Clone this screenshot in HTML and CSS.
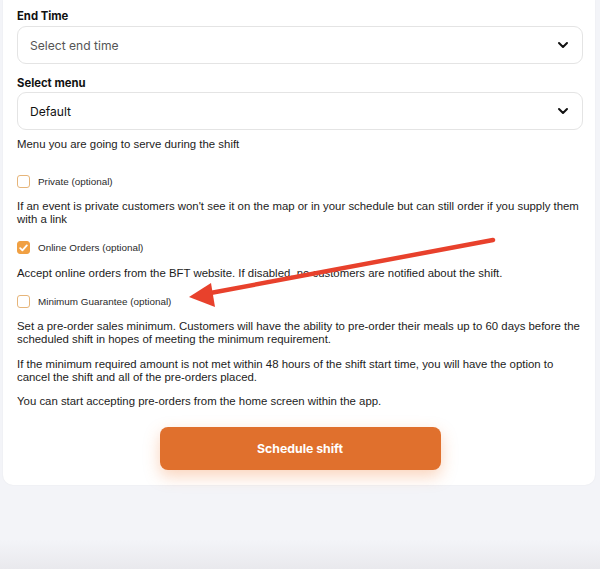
FILE: index.html
```html
<!DOCTYPE html>
<html>

<head>
  <meta name="viewport" content="width=device-width, initial-scale=1" />
  <link rel="stylesheet" href="styles.css">
</head>

<body>
  <div class="page">
    <form class="card">
      <label class="field-label">End Time</label>
      <div class="select">
        <span class="placeholder">Select end time</span>
        <svg class="chevron" width="12" height="8" viewBox="0 0 12 8"><path d="M2 2l4 4 4-4" fill="none" stroke="#111" stroke-width="2" stroke-linecap="round" stroke-linejoin="round"/></svg>
      </div>

      <label class="field-label second">Select menu</label>
      <div class="select">
        <span class="value">Default</span>
        <svg class="chevron" width="12" height="8" viewBox="0 0 12 8"><path d="M2 2l4 4 4-4" fill="none" stroke="#111" stroke-width="2" stroke-linecap="round" stroke-linejoin="round"/></svg>
      </div>
      <p class="help">Menu you are going to serve during the shift</p>

      <div class="check-row first">
        <span class="box"></span>
        <span class="check-label">Private (optional)</span>
      </div>
      <p class="desc">If an event is private customers won't see it on the map or in your schedule but can still order if you supply them with a link</p>

      <div class="check-row">
        <span class="box checked">
          <svg width="9" height="8" viewBox="0 0 9 8"><path d="M1.2 4.2l2.2 2.2 4.4-5" fill="none" stroke="#fff" stroke-width="1.8" stroke-linecap="round" stroke-linejoin="round"/></svg>
        </span>
        <span class="check-label">Online Orders (optional)</span>
      </div>
      <p class="desc">Accept online orders from the BFT website. If disabled, no customers are notified about the shift.</p>

      <div class="check-row">
        <span class="box"></span>
        <span class="check-label">Minimum Guarantee (optional)</span>
      </div>
      <p class="desc">Set a pre-order sales minimum. Customers will have the ability to pre-order their meals up to 60 days before the scheduled shift in hopes of meeting the minimum requirement.</p>
      <p class="desc gap">If the minimum required amount is not met within 48 hours of the shift start time, you will have the option to cancel the shift and all of the pre-orders placed.</p>
      <p class="desc">You can start accepting pre-orders from the home screen within the app.</p>

      <div class="actions">
        <button type="button" class="submit">Schedule shift</button>
      </div>
    </form>

    <!-- annotation arrow drawn over the screenshot -->
    <svg class="arrow" width="600" height="569" viewBox="0 0 600 569">
      <line x1="493" y1="240" x2="205" y2="294" stroke="#e8412c" stroke-width="4.5" stroke-linecap="round"/>
      <polygon points="189,297 211,283 215,307" fill="#e8412c"/>
    </svg>
  </div>
</body>

</html>
```

FILE: styles.css
```css
body {
  margin: 0;
  background: linear-gradient(#f3f4f8 0, #f3f4f8 540px, #e9e9ed 569px);
  font-family: "Liberation Sans", Arial, sans-serif;
  color: #1c1c1c;
  height: 569px;
  overflow: hidden;
}

.page {
  position: relative;
  height: 569px;
}

.card {
  display: block;
  margin: 0 5px 0 3px;
  padding: 8px 12px 15px 14px;
  background: #ffffff;
  border-radius: 0 0 10px 10px;
  box-shadow: 0 0 2px rgba(0, 0, 0, 0.06);
}

.field-label {
  display: block;
  font-family: Inter, sans-serif;
  font-weight: 700;
  font-size: 11.3px;
  line-height: 16px;
  color: #111;
  margin-bottom: 2px;
}

.field-label.second {
  margin-top: 11px;
  margin-bottom: 1px;
}

.select {
  height: 38px;
  box-sizing: border-box;
  border: 1px solid #e4e4e4;
  border-radius: 9px;
  display: flex;
  align-items: center;
  justify-content: space-between;
  padding: 0 12px 0 12px;
  font-family: Inter, sans-serif;
  font-size: 12.1px;
}

.placeholder {
  color: #555;
}

.value {
  color: #111;
}

.chevron {
  margin-right: 1px;
}

.help {
  margin: 7px 0 0;
  font-size: 11.4px;
  line-height: 14px;
}

.check-row {
  display: flex;
  align-items: center;
  gap: 8px;
  height: 16px;
  margin-top: 14px;
}

.check-row.first {
  margin-top: 22px;
}

.box {
  width: 13px;
  height: 13px;
  box-sizing: border-box;
  border: 1.5px solid #e6b57a;
  border-radius: 3px;
  display: flex;
  align-items: center;
  justify-content: center;
}

.box.checked {
  background: #f0a043;
  border-color: #f0a043;
}

.check-label {
  font-size: 9.9px;
  color: #2a2a2a;
}

.desc {
  margin: 11px 0 0;
  font-size: 11.4px;
  line-height: 12.8px;
}

.desc.gap {
  margin-top: 12px;
}

.actions {
  display: flex;
  justify-content: center;
  margin-top: 20px;
}

.submit {
  width: 281px;
  height: 43px;
  border: none;
  border-radius: 8px;
  background: #e0702d;
  color: #fff;
  font-family: Inter, sans-serif;
  font-weight: 700;
  font-size: 12.3px;
  box-shadow: 0 6px 16px rgba(240, 130, 60, 0.35);
}

.arrow {
  position: absolute;
  top: 0;
  left: 0;
  pointer-events: none;
}
```
